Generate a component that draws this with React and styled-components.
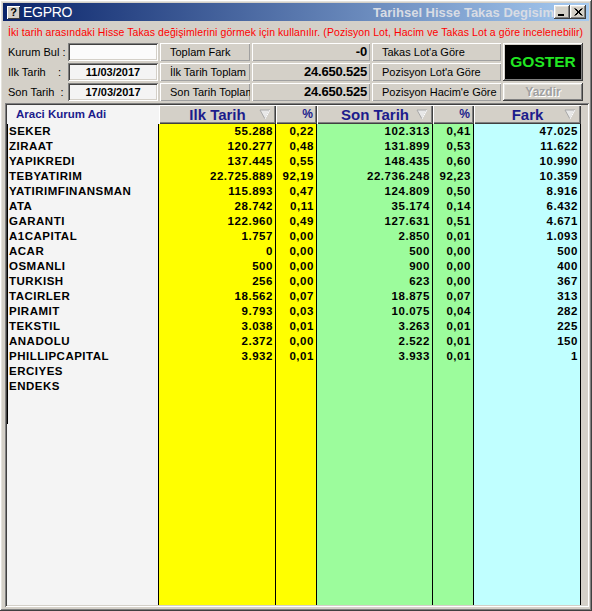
import React from "react";
import styled, { createGlobalStyle } from "styled-components";

const GlobalStyle = createGlobalStyle`
  html, body {
    margin: 0;
    padding: 0;
    background: #d4d0c8;
  }
  * {
    box-sizing: border-box;
  }
`;

const raised =
  "inset -1px -1px #404040, inset 1px 1px #ffffff, inset -2px -2px #808080, inset 2px 2px #e4e2dc";
const sunken =
  "inset 1px 1px #808080, inset -1px -1px #ffffff, inset 2px 2px #404040, inset -2px -2px #d4d0c8";

const COLS = "152px 117px 41px 116px 41px 107px";

const colBg = {
  name: "#f4f4f4",
  ilk: "#ffff00",
  son: "#9cfc9c",
  fark: "#c0ffff",
};

const rows = [
  ["SEKER", "55.288", "0,22", "102.313", "0,41", "47.025"],
  ["ZIRAAT", "120.277", "0,48", "131.899", "0,53", "11.622"],
  ["YAPIKREDI", "137.445", "0,55", "148.435", "0,60", "10.990"],
  ["TEBYATIRIM", "22.725.889", "92,19", "22.736.248", "92,23", "10.359"],
  ["YATIRIMFINANSMAN", "115.893", "0,47", "124.809", "0,50", "8.916"],
  ["ATA", "28.742", "0,11", "35.174", "0,14", "6.432"],
  ["GARANTI", "122.960", "0,49", "127.631", "0,51", "4.671"],
  ["A1CAPITAL", "1.757", "0,00", "2.850", "0,01", "1.093"],
  ["ACAR", "0", "0,00", "500", "0,00", "500"],
  ["OSMANLI", "500", "0,00", "900", "0,00", "400"],
  ["TURKISH", "256", "0,00", "623", "0,00", "367"],
  ["TACIRLER", "18.562", "0,07", "18.875", "0,07", "313"],
  ["PIRAMIT", "9.793", "0,03", "10.075", "0,04", "282"],
  ["TEKSTIL", "3.038", "0,01", "3.263", "0,01", "225"],
  ["ANADOLU", "2.372", "0,00", "2.522", "0,01", "150"],
  ["PHILLIPCAPITAL", "3.932", "0,01", "3.933", "0,01", "1"],
  ["ERCIYES", "", "", "", "", ""],
  ["ENDEKS", "", "", "", "", ""],
  ["", "", "", "", "", ""],
  ["", "", "", "", "", ""],
];

const kinds = ["name", "ilk", "ilk", "son", "son", "fark"];

function SortArrow() {
  return (
    <svg width="12" height="11" viewBox="0 0 12 11">
      <polygon points="1,1 11,1 6,10" fill="#e8e8e8" stroke="#a8a8a8" strokeWidth="1" />
      <line x1="6" y1="10" x2="11" y2="1" stroke="#ffffff" strokeWidth="1" />
    </svg>
  );
}

export default function App() {
  return (
    <>
      <GlobalStyle />
      <Window>
        <TitleBar>
          <HelpIcon>?</HelpIcon>
          <AppName>EGPRO</AppName>
          <Caption>Tarihsel Hisse Takas Degisim</Caption>
          <CtlButtons>
            <CtlButton>
              <svg width="8" height="8" viewBox="0 0 8 8">
                <rect x="0" y="6" width="6" height="2" fill="#000" />
              </svg>
            </CtlButton>
            <CtlButton>
              <svg width="9" height="8" viewBox="0 0 9 8">
                <path d="M0.5 0.5 L7.5 7.5 M1.5 0.5 L8.5 7.5 M7.5 0.5 L0.5 7.5 M8.5 0.5 L1.5 7.5" stroke="#000" strokeWidth="1" />
              </svg>
            </CtlButton>
          </CtlButtons>
        </TitleBar>

        <InfoLine>
          İki tarih arasındaki Hisse Takas değişimlerini görmek için kullanılır. (Pozisyon Lot, Hacim ve Takas Lot a göre incelenebilir)
        </InfoLine>

        <Form>
          <Label>Kurum Bul :</Label>
          <Input $white />
          <Panel>Toplam Fark</Panel>
          <Value>-0</Value>
          <Button>Takas Lot'a Göre</Button>
          <GoButton>GOSTER</GoButton>

          <Label>Ilk Tarih&nbsp;&nbsp;&nbsp;&nbsp;:</Label>
          <Input>11/03/2017</Input>
          <Panel>İlk Tarih Toplam</Panel>
          <Value>24.650.525</Value>
          <Button>Pozisyon Lot'a Göre</Button>

          <Label>Son Tarih&nbsp;&nbsp;:</Label>
          <Input>17/03/2017</Input>
          <Panel>Son Tarih Toplam</Panel>
          <Value>24.650.525</Value>
          <Button>Pozisyon Hacim'e Göre</Button>
          <PrintButton>Yazdir</PrintButton>
        </Form>

        <Grid>
          <HeadRow>
            <NameHead>Araci Kurum Adi</NameHead>
            <HeadCell>
              <span />
              <HeadTitle>Ilk Tarih</HeadTitle>
              <ArrowWrap><SortArrow /></ArrowWrap>
            </HeadCell>
            <PctHead>%</PctHead>
            <HeadCell>
              <span />
              <HeadTitle>Son Tarih</HeadTitle>
              <ArrowWrap><SortArrow /></ArrowWrap>
            </HeadCell>
            <PctHead>%</PctHead>
            <HeadCell>
              <span />
              <HeadTitle>Fark</HeadTitle>
              <ArrowWrap><SortArrow /></ArrowWrap>
            </HeadCell>
          </HeadRow>
          <Body>
            {rows.map((r, i) => (
              <Row key={i}>
                {r.map((v, j) => (
                  <Cell key={j} $kind={kinds[j]} $name={j === 0}>
                    {v}
                  </Cell>
                ))}
              </Row>
            ))}
            <Filler>
              {kinds.map((k, j) => (
                <Cell key={j} $kind={k} $plain />
              ))}
            </Filler>
          </Body>
        </Grid>
      </Window>
    </>
  );
}

const Window = styled.div`
  width: 592px;
  height: 611px;
  padding: 3px;
  display: flex;
  flex-direction: column;
  background: #d4d0c8;
  box-shadow: ${raised};
  font-family: "Liberation Sans", Arial, sans-serif;
  overflow: hidden;
`;

const TitleBar = styled.div`
  height: 18px;
  display: flex;
  align-items: center;
  padding: 0 3px 0 4px;
  background: linear-gradient(to right, #0a246a, #a6caf0);
`;

const HelpIcon = styled.div`
  width: 13px;
  height: 13px;
  background: #d4d0c8;
  box-shadow: inset 1px 1px #fff, inset -1px -1px #404040;
  font-size: 11px;
  font-weight: bold;
  line-height: 13px;
  text-align: center;
  color: #000;
`;

const AppName = styled.div`
  margin-left: 3px;
  color: #fff;
  font-size: 14px;
  letter-spacing: -0.3px;
`;

const Caption = styled.div`
  margin-left: auto;
  white-space: nowrap;
  color: #d8dce4;
  font-size: 13px;
  font-weight: bold;
`;

const CtlButtons = styled.div`
  display: flex;
`;

const CtlButton = styled.div`
  width: 16px;
  height: 14px;
  display: flex;
  align-items: center;
  justify-content: center;
  background: #d4d0c8;
  box-shadow: ${raised};
`;

const InfoLine = styled.div`
  height: 22px;
  padding-left: 5px;
  display: flex;
  align-items: center;
  color: #ff0000;
  font-size: 10.5px;
  letter-spacing: 0.08px;
  white-space: nowrap;
`;

const Form = styled.div`
  display: grid;
  grid-template-columns: 58px 90px 90px 118px 129px 80px;
  grid-template-rows: 18px 18px 18px;
  column-gap: 2px;
  row-gap: 2px;
  padding-left: 5px;
  margin-bottom: 2px;
`;

const Label = styled.div`
  font-size: 11px;
  line-height: 18px;
  color: #000;
  white-space: nowrap;
`;

const Input = styled.div`
  background: ${(p) => (p.$white ? "#fbfbfb" : "#f4f4f4")};
  box-shadow: ${sunken};
  font-size: 11px;
  font-weight: bold;
  line-height: 18px;
  text-align: center;
  color: #000;
`;

const Panel = styled.div`
  background: #d4d0c8;
  box-shadow: inset 1px 1px #ffffff, inset -1px -1px #a0a0a0;
  padding-left: 10px;
  font-size: 11px;
  line-height: 18px;
  white-space: nowrap;
  overflow: hidden;
  color: #000;
`;

const Value = styled.div`
  background: #d4d0c8;
  box-shadow: inset 1px 1px #ffffff, inset -1px -1px #a0a0a0;
  padding-right: 3px;
  text-align: right;
  font-size: 13px;
  font-weight: bold;
  letter-spacing: -0.2px;
  line-height: 18px;
  color: #000;
`;

const Button = styled(Panel)`
  padding-left: 10px;
`;

const GoButton = styled.div`
  grid-column: 6;
  grid-row: 1 / span 2;
  background: #000;
  box-shadow: inset -1px -1px #404040, inset 1px 1px #ffffff, inset -2px -2px #808080, inset 2px 2px #d4d0c8;
  display: flex;
  align-items: center;
  justify-content: center;
  color: #22e622;
  font-size: 15.5px;
  font-weight: bold;
`;

const PrintButton = styled.div`
  grid-column: 6;
  background: #d4d0c8;
  box-shadow: ${raised};
  text-align: center;
  line-height: 18px;
  font-size: 12px;
  font-weight: bold;
  color: #a0a0a0;
  text-shadow: 1px 1px #ffffff;
`;

const Grid = styled.div`
  flex: 1;
  display: flex;
  flex-direction: column;
  margin: 0 0 1px 2px;
  padding: 2px;
  box-shadow: ${sunken};
  background: #d4d0c8;
  min-height: 0;
`;

const HeadRow = styled.div`
  display: grid;
  grid-template-columns: ${COLS};
  height: 19px;
`;

const NameHead = styled.div`
  background: ${colBg.name};
  padding-left: 9px;
  color: #1c1c8c;
  font-size: 11.5px;
  font-weight: bold;
  line-height: 19px;
`;

const HeadCell = styled.div`
  display: grid;
  grid-template-columns: 1fr auto 1fr;
  align-items: center;
  background: #d4d0c8;
  box-shadow: inset 1px 1px #ffffff, inset -1px -1px #404040, inset -2px -2px #808080;
`;

const HeadTitle = styled.span`
  color: #1c1c8c;
  font-size: 15px;
  font-weight: bold;
  white-space: nowrap;
`;

const ArrowWrap = styled.span`
  justify-self: end;
  display: flex;
  padding-right: 5px;
`;

const PctHead = styled.div`
  background: #d4d0c8;
  box-shadow: inset 1px 1px #ffffff, inset -1px -1px #404040, inset -2px -2px #808080;
  text-align: right;
  padding-right: 4px;
  color: #1c1c8c;
  font-size: 12px;
  font-weight: bold;
  line-height: 19px;
`;

const Body = styled.div`
  flex: 1;
  display: flex;
  flex-direction: column;
`;

const Row = styled.div`
  display: grid;
  grid-template-columns: ${COLS};
  height: 15px;
`;

const Filler = styled(Row)`
  flex: 1;
  height: auto;
`;

const Cell = styled.div`
  background: ${(p) => colBg[p.$kind]};
  border-right: 1px solid #000;
  border-left: ${(p) => (p.$name && !p.$plain ? "1px solid #000" : "1px solid transparent")};
  padding: ${(p) => (p.$name ? "0 0 0 1px" : "0 2px 0 0")};
  text-align: ${(p) => (p.$name ? "left" : "right")};
  font-size: 11.5px;
  font-weight: bold;
  letter-spacing: ${(p) => (p.$name ? "0.5px" : "0.55px")};
  line-height: 15px;
  color: #000;
  white-space: nowrap;
  overflow: hidden;
`;
